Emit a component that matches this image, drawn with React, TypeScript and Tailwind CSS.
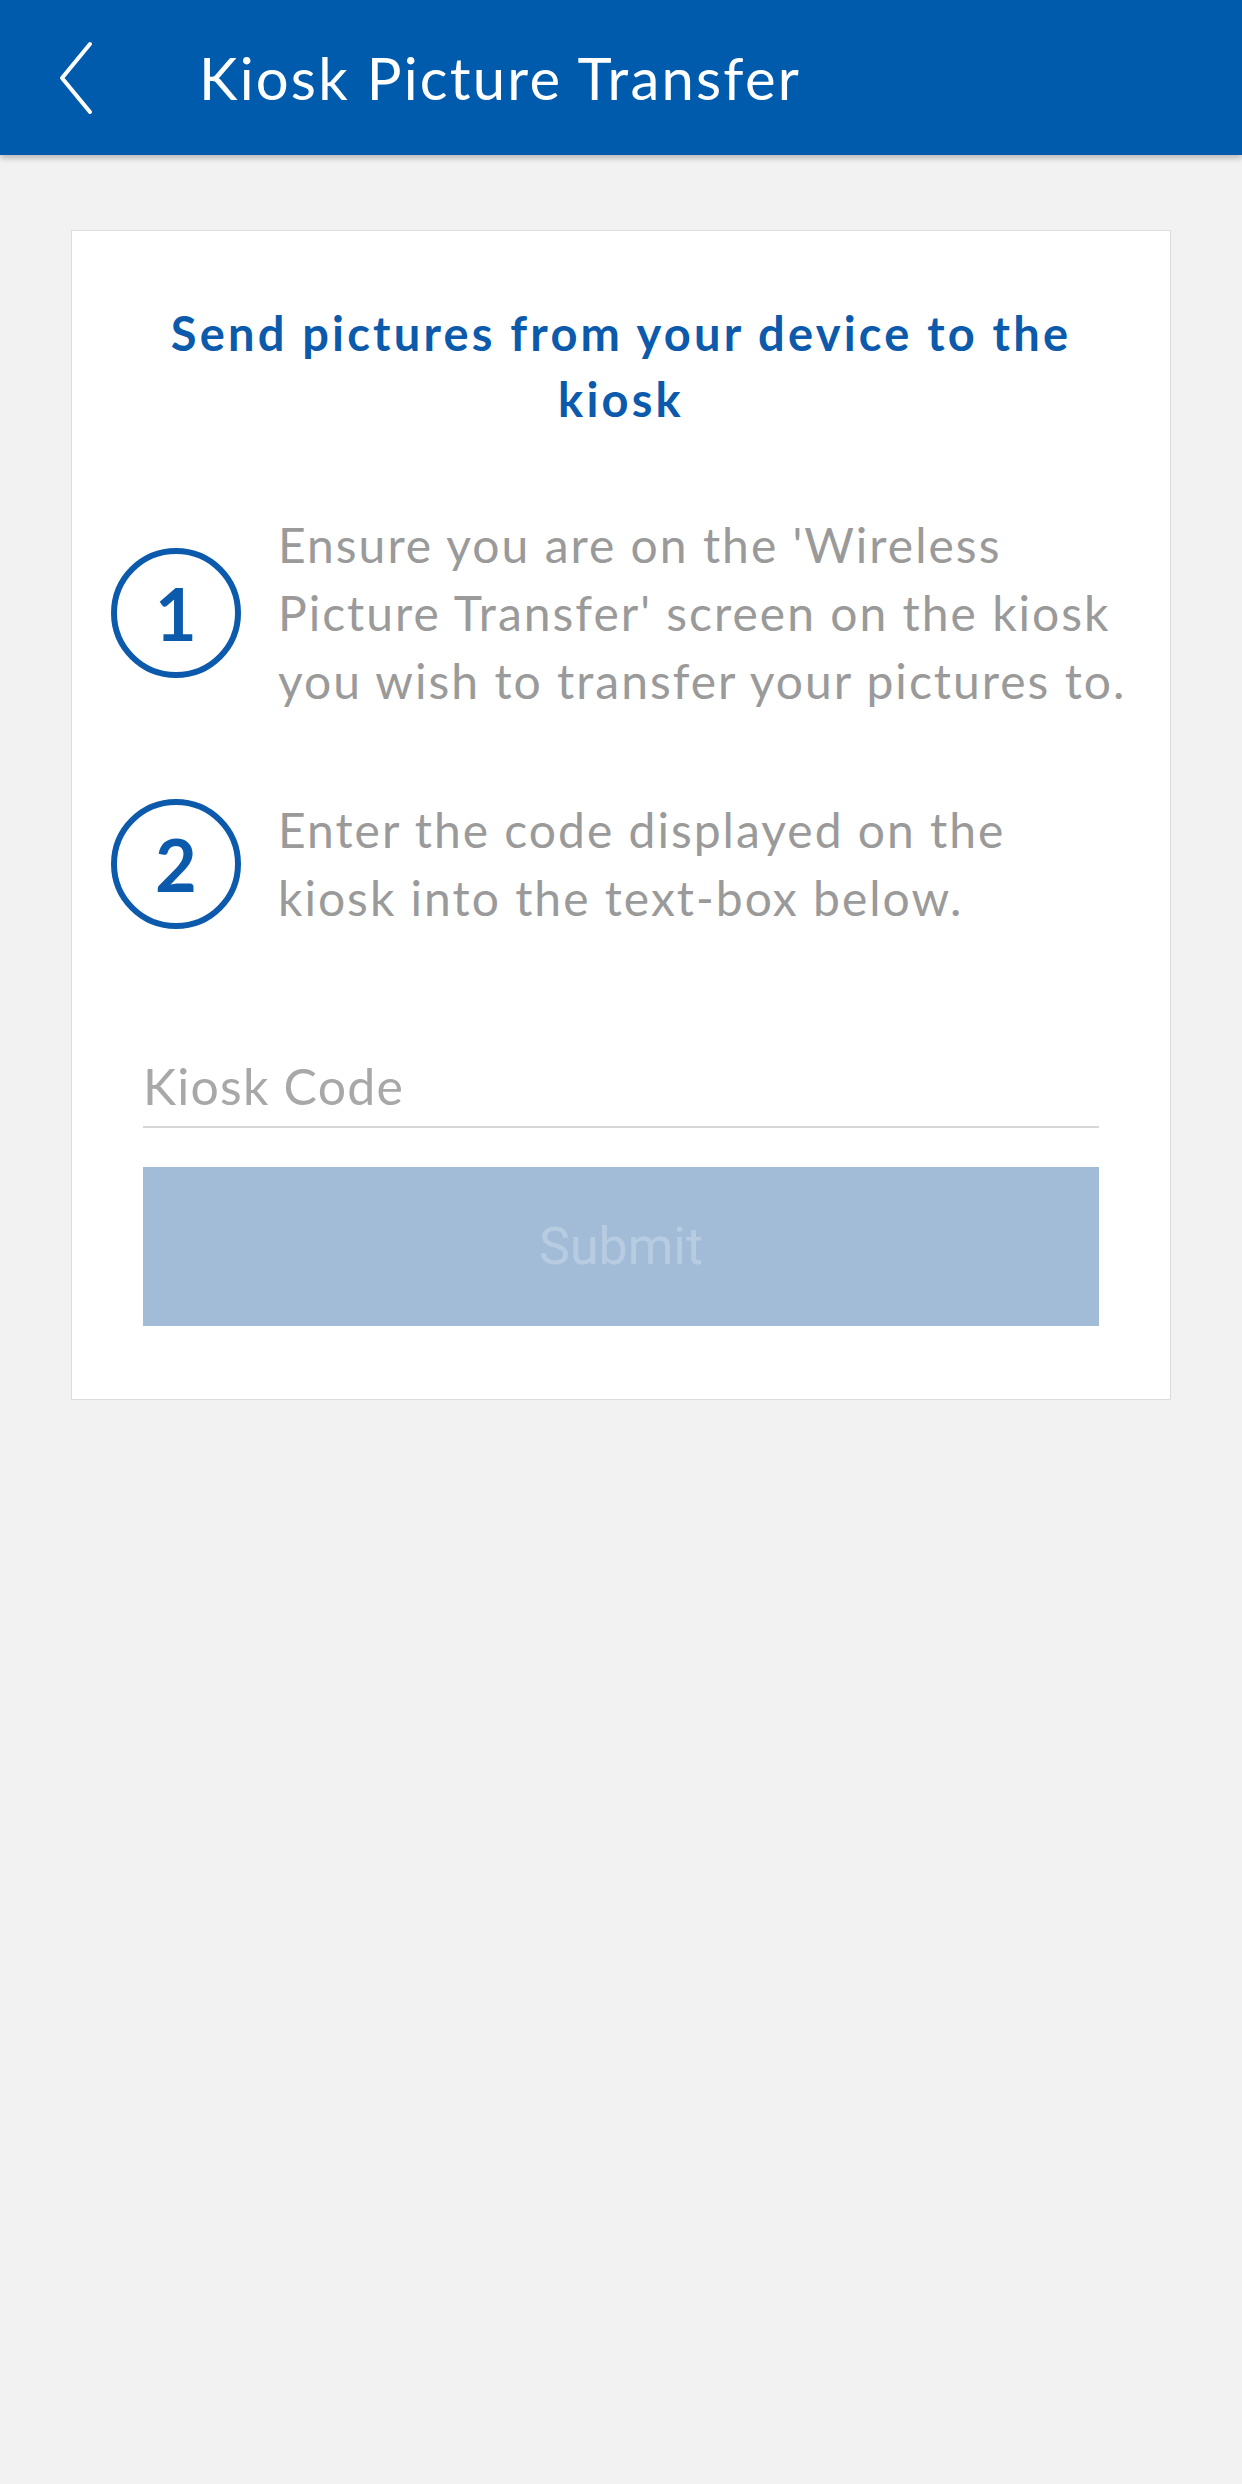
import React from "react";

function Chevron() {
  return (
    <svg width="40" height="80" viewBox="0 0 40 80" fill="none">
      <path d="M32 6 L4 40 L32 74" stroke="#ffffff" strokeWidth="4" strokeLinecap="round" strokeLinejoin="round" />
    </svg>
  );
}

function StepCircle({ n }: { n: string }) {
  return (
    <div className="w-[130px] h-[130px] shrink-0 rounded-full border-[6px] border-[#0b5aab] flex items-center justify-center">
      <span className="text-[72px] leading-none font-bold text-[#0b5aab]" style={{ fontFamily: "Lato, sans-serif" }}>
        {n}
      </span>
    </div>
  );
}

export default function App() {
  return (
    <div className="min-h-[2484px] w-full bg-[#f2f2f2]" style={{ fontFamily: "Lato, 'Noto Sans', sans-serif" }}>
      <header className="h-[155px] bg-[#005bac] flex items-center shadow-[0_3px_6px_rgba(0,0,0,0.25)] relative">
        <div className="w-[199px] pl-[58px] flex items-center">
          <Chevron />
        </div>
        <h1 className="text-white text-[58px] leading-none font-normal tracking-[2.2px]">Kiosk Picture Transfer</h1>
      </header>

      <main className="pt-[75px] px-[71px]">
        <section className="bg-white border border-[#dcdcdc] pt-[69px] pb-[73px]">
          <h2 className="text-center text-[#0b5aab] font-bold text-[47px] leading-[66px] tracking-[3.2px] px-[60px]">
            Send pictures from your device to the
            <br />
            kiosk
          </h2>

          <div className="mt-[79px] flex items-center pl-[39px] gap-[37px]">
            <StepCircle n="1" />
            <p className="w-[880px] text-[#9a9a9a] text-[48px] leading-[68px] tracking-[2px]">
              Ensure you are on the 'Wireless
              <br />
              Picture Transfer' screen on the kiosk
              <br />
              you wish to transfer your pictures to.
            </p>
          </div>

          <div className="mt-[81px] flex items-center pl-[39px] gap-[37px]">
            <StepCircle n="2" />
            <p className="w-[880px] text-[#9a9a9a] text-[48px] leading-[68px] tracking-[2px]">
              Enter the code displayed on the
              <br />
              kiosk into the text-box below.
            </p>
          </div>

          <div className="px-[71px]">
            <div className="mt-[114px] h-[82px] border-b-2 border-[#d6d6d6] flex items-center">
              <span className="text-[#a8a8a8] text-[50px] leading-none tracking-[1.2px]">Kiosk Code</span>
            </div>
            <button
              className="mt-[39px] w-full h-[159px] bg-[#a2bcd8] flex items-center justify-center"
              style={{ fontFamily: "Roboto, 'Liberation Sans', sans-serif" }}
            >
              <span className="text-[#b8cce1] text-[52px] leading-none">Submit</span>
            </button>
          </div>
        </section>
      </main>
    </div>
  );
}
